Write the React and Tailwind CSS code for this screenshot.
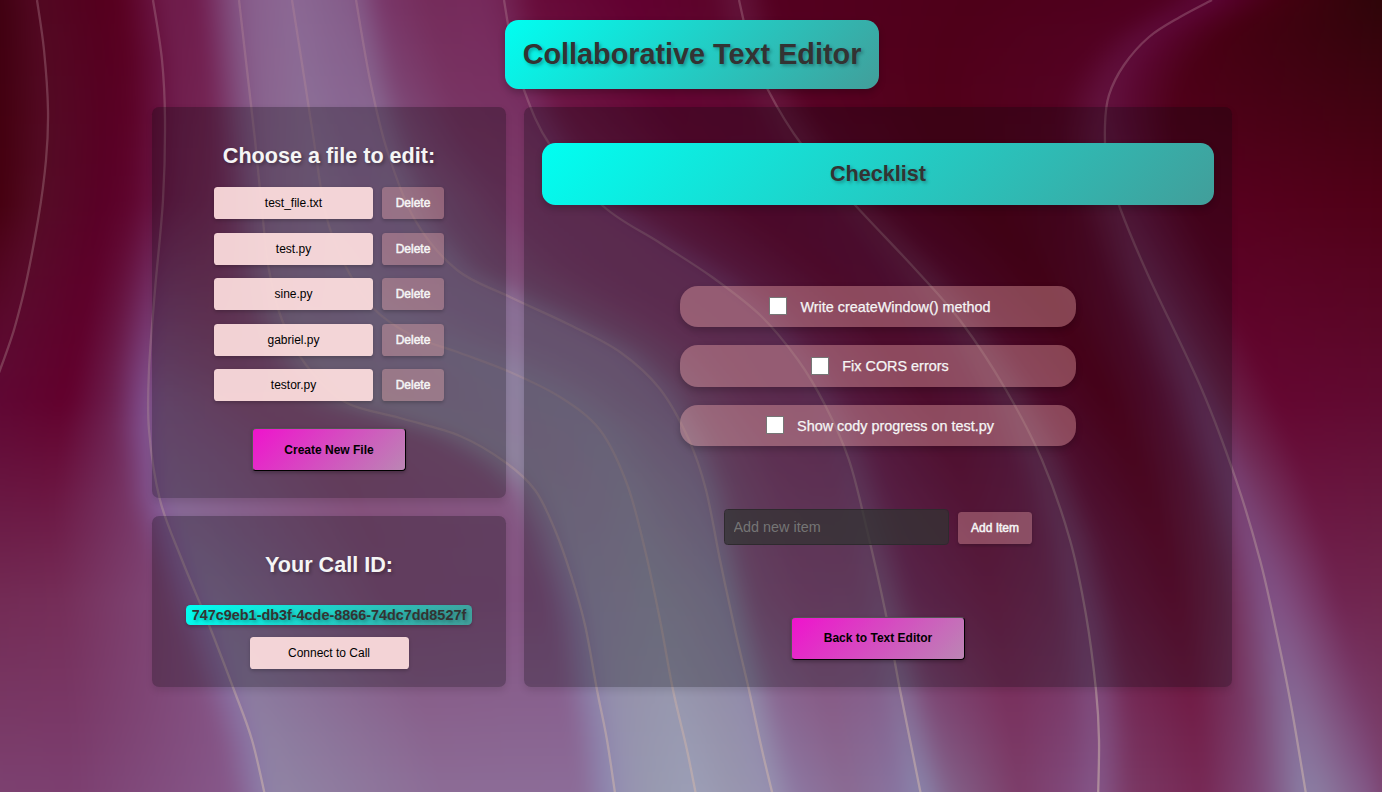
import { useState } from "react";

const W = 1382;
const H = 792;

// Strand curves, each a list of [x, y] points ordered by y.
const STRANDS = [
  [[37, 0], [44, 50], [48, 110], [46, 160], [38, 220], [22, 300], [0, 370], [-60, 520], [-120, 800]],
  [[153, 0], [162, 60], [165, 120], [163, 200], [155, 290], [149, 370], [149, 430], [160, 500], [182, 560], [209, 625], [234, 690], [252, 740], [266, 800]],
  [[239, 0], [247, 70], [255, 140], [262, 210], [269, 270], [282, 320], [306, 365], [345, 402], [400, 418], [460, 436], [505, 462], [535, 490], [555, 530], [571, 575], [585, 625], [597, 690], [607, 740], [616, 800]],
  [[292, 0], [303, 70], [313, 135], [326, 215], [345, 265], [373, 308], [413, 336], [460, 353], [510, 372], [560, 397], [600, 430], [627, 484], [645, 550], [660, 620], [673, 690], [687, 750], [697, 800]],
  [[356, 0], [370, 80], [387, 150], [415, 220], [457, 270], [510, 297], [570, 325], [620, 352], [660, 389], [689, 440], [706, 490], [720, 560], [735, 630], [749, 690], [762, 750], [774, 800]],
  [[504, 0], [511, 40], [524, 90], [550, 145], [603, 206], [660, 243], [712, 277], [760, 315], [798, 360], [825, 405], [849, 460], [867, 530], [885, 610], [900, 690], [912, 750], [922, 800]],
  [[739, 0], [750, 45], [768, 90], [802, 145], [855, 205], [916, 270], [962, 323], [1006, 390], [1042, 460], [1070, 540], [1086, 615], [1096, 690], [1099, 740], [1098, 800]],
  [[1212, 0], [1180, 17], [1149, 37], [1124, 65], [1109, 95], [1105, 125], [1107, 165], [1120, 208], [1148, 275], [1202, 390], [1236, 480], [1260, 560], [1277, 635], [1291, 705], [1307, 800]],
];

const ROWS = [0, 200, 400, 600, 792];

// Backdrop colours in x order; each entry is placed on a strand (s), offset by d or moved t of the way to the next one.
const COLUMNS = [
  { x: 0, c: ["3f0010", "45000f", "640a38", "74305e", "7f5080"] },
  { s: 0, c: ["520822", "550c26", "5f0834", "702850", "7c4470"] },
  { s: 0, t: 0.5, c: ["54001e", "590026", "62002c", "752d58", "7c3f70"] },
  { s: 1, d: -34, c: ["58001f", "5e042c", "6c2050", "804878", "86588a"] },
  { s: 1, d: -2, c: ["66103c", "6a1646", "805090", "86649c", "8c7ca8"] },
  { s: 1, d: 12, c: ["6e1c4a", "702050", "845a8a", "88749c", "9084a4"] },
  { s: 1, t: 0.5, c: ["701c4c", "762a58", "855078", "84527e", "8c6c96"] },
  { s: 2, d: -34, c: ["742658", "7a3464", "85587e", "845484", "8c6c98"] },
  { s: 2, d: -6, c: ["825080", "845c88", "89748f", "8a76a0", "8e88b0"] },
  { s: 2, d: 10, c: ["875e8c", "8a6890", "8c8098", "908aa8", "9692b0"] },
  { s: 2, t: 0.5, c: ["8a628f", "8c6c94", "8e7c9c", "938ca8", "989ab0"] },
  { s: 3, d: 0, c: ["8b6894", "8c7498", "8d82a0", "9292a8", "9c9eb6"] },
  { s: 3, t: 0.5, c: ["87628e", "8b6a96", "8b7496", "928ca6", "9896ae"] },
  { s: 4, d: 0, c: ["845a88", "8a7096", "876c92", "8c86a4", "9690b0"] },
  { s: 4, d: 26, c: ["793668", "805680", "805078", "865882", "8c76a0"] },
  { s: 4, t: 0.5, c: ["752c5a", "7c3c6c", "7d3c6a", "844d7a", "8a6a92"] },
  { s: 5, d: -22, c: ["762a5c", "7a3868", "7a3666", "824e7a", "8874a0"] },
  { s: 5, d: 0, c: ["722454", "78346a", "783a6c", "825a84", "8a86ac"] },
  { s: 5, d: 30, c: ["680c3a", "701f4e", "701f50", "783062", "826088"] },
  { s: 5, t: 0.55, c: ["620030", "660a35", "690e38", "762350", "7c3c68"] },
  { s: 6, d: -30, c: ["5c042a", "620c38", "6a1644", "742e5a", "80487a"] },
  { s: 6, d: 0, c: ["62143a", "66183e", "703058", "7a4474", "84588a"] },
  { s: 6, d: 32, c: ["540020", "5a0428", "640a34", "6e1c48", "7a3864"] },
  { s: 6, t: 0.5, c: ["4e0019", "540018", "5e001e", "6a0e34", "762854"] },
  { s: 7, d: -46, c: ["500020", "580424", "64103a", "702850", "7e4878"] },
  { s: 7, d: -2, c: ["5c0838", "681e46", "74386a", "805488", "8a7ea4"] },
  { s: 7, d: 18, c: ["56002a", "641440", "6c244c", "804c7e", "8a789e"] },
  { s: 7, d: 70, c: ["440010", "580020", "640630", "702450", "805080"] },
  { x: W, c: ["2e0509", "500016", "600a30", "70264e", "7c4470"] },
];

function xAt(points, y) {
  if (y <= points[0][1]) return points[0][0];
  for (let i = 1; i < points.length; i++) {
    const [x1, y1] = points[i];
    const [x0, y0] = points[i - 1];
    if (y <= y1) return x0 + ((x1 - x0) * (y - y0)) / (y1 - y0);
  }
  return points[points.length - 1][0];
}

function colourAt(colours, y) {
  let i = 0;
  while (i < ROWS.length - 2 && y > ROWS[i + 1]) i++;
  const t = Math.min(1, Math.max(0, (y - ROWS[i]) / (ROWS[i + 1] - ROWS[i])));
  const mix = [0, 2, 4].map((k) => {
    const a = parseInt(colours[i].slice(k, k + 2), 16);
    const b = parseInt(colours[i + 1].slice(k, k + 2), 16);
    return Math.round(a + (b - a) * t);
  });
  return `rgb(${mix.join(",")})`;
}

function stopsAt(y) {
  let last = -300;
  return COLUMNS.map((col) => {
    let x = col.x;
    if (col.s !== undefined) {
      x = xAt(STRANDS[col.s], y) + (col.d || 0);
      if (col.t) {
        const next = xAt(STRANDS[col.s + 1], y);
        x += (next - x) * col.t;
      }
    }
    if (col.x === 0) x = Math.min(0, xAt(STRANDS[0], y) - 40);
    x = Math.max(x, last + 1);
    last = x;
    return { x: (x + 300) / (W + 400), colour: colourAt(col.c, y) };
  });
}

function smoothPath(p) {
  let d = `M${p[0][0]} ${p[0][1]}`;
  for (let i = 0; i < p.length - 1; i++) {
    const a = p[i - 1] || p[i];
    const b = p[i];
    const c = p[i + 1];
    const e = p[i + 2] || c;
    d += ` C${b[0] + (c[0] - a[0]) / 6} ${b[1] + (c[1] - a[1]) / 6} ${c[0] - (e[0] - b[0]) / 6} ${c[1] - (e[1] - b[1]) / 6} ${c[0]} ${c[1]}`;
  }
  return d;
}

const STEP = 4;
const STRIPS = Array.from({ length: (H + 48) / STEP }, (_, i) => i * STEP - 24);

function Backdrop() {
  return (
    <svg className="absolute inset-0 h-full w-full" viewBox={`0 0 ${W} ${H}`} preserveAspectRatio="none" aria-hidden="true">
      <defs>
        {STRIPS.map((y) => (
          <linearGradient key={y} id={`strip${y}`} gradientUnits="userSpaceOnUse" x1={-300} x2={W + 100} y1="0" y2="0">
            {stopsAt(y + STEP / 2).map((s, i) => (
              <stop key={i} offset={s.x} stopColor={s.colour} />
            ))}
          </linearGradient>
        ))}
        <linearGradient id="strand" gradientUnits="userSpaceOnUse" x1="0" x2="0" y1="0" y2={H}>
          <stop offset="0" stopColor="#b88a98" stopOpacity="0.34" />
          <stop offset="0.5" stopColor="#b89a98" stopOpacity="0.33" />
          <stop offset="1" stopColor="#ccb4ac" stopOpacity="0.58" />
        </linearGradient>
        <filter id="soften" filterUnits="userSpaceOnUse" x="-30" y="-24" width={W + 60} height={H + 48} colorInterpolationFilters="sRGB">
          <feGaussianBlur stdDeviation="8" />
        </filter>
        <filter id="hair" filterUnits="userSpaceOnUse" x="0" y="0" width={W} height={H} colorInterpolationFilters="sRGB">
          <feGaussianBlur stdDeviation="0.6" />
        </filter>
      </defs>
      <rect width={W} height={H} fill="#5a2040" />
      {STRIPS.map((y) => (
        <rect key={y} x="-30" y={y} width={W + 60} height={STEP + 0.5} fill={`url(#strip${y})`} />
      ))}
      <g filter="url(#soften)">
        {STRIPS.map((y) => (
          <rect key={y} x="-30" y={y} width={W + 60} height={STEP + 0.5} fill={`url(#strip${y})`} />
        ))}
      </g>
      <g fill="none" stroke="url(#strand)" strokeWidth="2.3" filter="url(#hair)">
        {STRANDS.map((p, i) => (
          <path key={i} d={smoothPath(p)} />
        ))}
      </g>
    </svg>
  );
}

const FILES = ["test_file.txt", "test.py", "sine.py", "gabriel.py", "testor.py"];
const TASKS = ["Write createWindow() method", "Fix CORS errors", "Show cody progress on test.py"];

const panel = "rounded-[7.2px] bg-[rgba(8,8,12,0.28)] shadow-[0_3.6px_7.2px_rgba(0,0,0,0.1)]";
const heading = "text-[21.6px] leading-[25px] font-bold [text-shadow:1.8px_1.8px_3.6px_rgba(0,0,0,0.3)]";
const pale = "h-8 w-[159px] rounded-[3.6px] bg-[rgba(255,224,224,0.92)] text-[12px] leading-[14px] text-black shadow-[0_1.8px_3.6px_rgba(0,0,0,0.2)]";
const muted = "h-8 rounded-[3.6px] bg-[rgba(255,182,182,0.33)] text-[12px] leading-[14px] text-[#f5f5f5] shadow-[0_1.8px_3.6px_rgba(0,0,0,0.2)] [-webkit-text-stroke:0.5px_#f5f5f5]";
const vivid = "rounded-[4px] border border-t-[#555] border-l-[#555] border-r-black border-b-black bg-linear-[135deg] from-[#ef13cd] to-[#bb86b4] text-[12px] leading-[14px] font-bold text-black shadow-[0_1.8px_3.6px_rgba(0,0,0,0.25)]";
const teal = "bg-linear-[135deg] from-[#00fff2] to-[#429e9a] text-[#333]";

function FilePanel() {
  return (
    <section className={`${panel} flex h-[391px] flex-col items-center pt-9`}>
      <h2 className={`${heading} text-[#f5f5f5]`}>Choose a file to edit:</h2>
      <ul className="mt-[19.3px] flex flex-col gap-[13.5px]">
        {FILES.map((name) => (
          <li key={name} className="flex gap-[9px]">
            <button className={pale}>{name}</button>
            <button className={`${muted} w-[62px]`}>Delete</button>
          </li>
        ))}
      </ul>
      <button className={`${vivid} mt-[27.1px] h-[43px] w-[154px]`}>Create New File</button>
    </section>
  );
}

function CallPanel() {
  return (
    <section className={`${panel} flex h-[171px] flex-col items-center pt-9`}>
      <h2 className={`${heading} text-[#f5f5f5]`}>Your Call ID:</h2>
      <p className={`${teal} mt-7 flex h-5 w-[286px] items-center justify-center rounded-[4.5px] text-[14.4px] leading-5 font-bold whitespace-nowrap shadow-[0_1.8px_3.6px_rgba(0,0,0,0.2)] [text-shadow:1.8px_1.8px_3.6px_rgba(0,0,0,0.3)]`}>
        747c9eb1-db3f-4cde-8866-74dc7dd8527f
      </p>
      <button className={`${pale} mt-3`}>Connect to Call</button>
    </section>
  );
}

function Task({ label }) {
  const [done, setDone] = useState(false);
  return (
    <label className="flex h-[41.4px] w-[396px] items-center justify-center rounded-[18px] bg-[rgba(255,182,182,0.36)] pl-1 text-[14.4px] leading-[17px] text-[#f5f5f5] shadow-[0_3.6px_7.2px_rgba(0,0,0,0.2)]">
      <input
        type="checkbox"
        checked={done}
        onChange={() => setDone(!done)}
        className="mr-[13px] size-[18px] appearance-none border border-[#767676] bg-white checked:bg-[#0075ff]"
      />
      <span className="pt-[1.5px] [-webkit-text-stroke:0.25px_#f5f5f5]">{label}</span>
    </label>
  );
}

function ChecklistPanel() {
  return (
    <section className={`${panel} flex h-[580px] w-[708px] flex-col items-center pt-9`}>
      <h2 className={`${heading} ${teal} h-[62px] w-[672px] rounded-[13.5px] pt-[18px] text-center shadow-[0_3.6px_7.2px_rgba(0,0,0,0.2)]`}>Checklist</h2>
      <div className="mt-[80.8px] flex flex-col gap-[18px]">
        {TASKS.map((t) => (
          <Task key={t} label={t} />
        ))}
      </div>
      <div className="mt-[63px] flex h-9 items-center gap-[9px]">
        <input
          placeholder="Add new item"
          className="h-9 w-[225px] rounded-[3.6px] border border-[#2e2a2e] bg-[rgba(51,51,51,0.75)] bg-clip-padding px-[8.5px] text-[14.4px] text-white placeholder:text-[#757575]"
        />
        <button className={`${muted} relative top-px w-[74px]`}>Add Item</button>
      </div>
      <button className={`${vivid} mt-[72px] h-[43px] w-[174px]`}>Back to Text Editor</button>
    </section>
  );
}

export default function App() {
  return (
    <div className="relative h-[792px] w-full overflow-hidden bg-[#5a0024] font-['Liberation_Sans',Arial,sans-serif]">
      <Backdrop />
      <main className="relative flex flex-col items-center pt-5 pl-[2px]">
        <h1 className={`${teal} h-[69px] w-[374px] rounded-[13.5px] text-center text-[28.8px] leading-[69px] font-bold shadow-[0_3.6px_7.2px_rgba(0,0,0,0.2)] [text-shadow:1.8px_1.8px_3.6px_rgba(0,0,0,0.3)]`}>
          Collaborative Text Editor
        </h1>
        <div className="mt-[18px] flex w-[1080px] gap-[18px]">
          <div className="flex w-[354px] flex-col gap-[18px]">
            <FilePanel />
            <CallPanel />
          </div>
          <ChecklistPanel />
        </div>
      </main>
    </div>
  );
}
